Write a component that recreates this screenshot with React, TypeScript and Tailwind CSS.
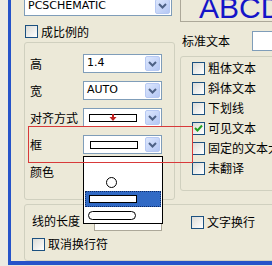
import React from "react";

const cjk = { fontFamily: '"Noto Sans CJK SC", "Noto Sans", sans-serif' };

const Chevron: React.FC = () => (
  <svg width="9" height="6" viewBox="0 0 9 6">
    <path d="M1 1 L4.5 4.5 L8 1" fill="none" stroke="#4d6185" strokeWidth="2" />
  </svg>
);

const DropButton: React.FC = () => (
  <div className="w-[15px] h-[15px] mr-[1px] rounded-[2px] border border-[#b7c9f3] bg-gradient-to-br from-[#dde7fd] to-[#b4c7f4] flex items-center justify-center">
    <Chevron />
  </div>
);

interface ComboProps {
  className?: string;
  children?: React.ReactNode;
}

const Combo: React.FC<ComboProps> = ({ className = "", children }) => (
  <div className={`h-[19px] border border-[#7f9db9] bg-white flex items-center ${className}`}>
    <div className="flex-1 flex items-center pl-[3px] overflow-hidden">{children}</div>
    <DropButton />
  </div>
);

const Checkbox: React.FC<{ checked?: boolean }> = ({ checked }) => (
  <div className="w-[13px] h-[13px] shrink-0 border border-[#1c5180] bg-gradient-to-br from-[#dcdcd7] to-white flex items-center justify-center">
    {checked && (
      <svg width="9" height="9" viewBox="0 0 9 9">
        <path d="M1 4 L3.5 6.5 L8 1.5" fill="none" stroke="#21a121" strokeWidth="2" />
      </svg>
    )}
  </div>
);

const CheckRow: React.FC<{ label: string; checked?: boolean }> = ({ label, checked }) => (
  <div className="h-[20px] flex items-center gap-[3px]">
    <Checkbox checked={checked} />
    <span className="text-[12px] leading-none whitespace-nowrap" style={cjk}>
      {label}
    </span>
  </div>
);

// rectangle preview used in the frame combo / list
const RectShape: React.FC = () => <div className="w-[48px] h-[8px] border border-black bg-white" />;

const App: React.FC = () => {
  const rows = ["高", "宽", "对齐方式", "框", "颜色"];

  return (
    <div className="w-[272px] h-[266px] overflow-hidden flex bg-[#ecebe3]">
      <div className="w-[8px] shrink-0" />
      <div className="flex-1 flex flex-col">
        <div className="relative flex-1 flex flex-col bg-[#ece9d8] border-l-[3px] border-b-[4px] border-[#2653c9] overflow-hidden">
          {/* top area */}
          <div className="h-[200px] flex items-start pl-[13px]">
            {/* left column */}
            <div className="w-[151px] shrink-0 flex flex-col">
              <Combo className="mt-[-4px] w-[148px] h-[20px]">
                <span className="text-[11px] text-black" style={{ fontFamily: '"DejaVu Sans", sans-serif' }}>
                  PCSCHEMATIC
                </span>
              </Combo>
              <div className="mt-[8px] h-[15px] flex items-center gap-[3px] pl-[1px]">
                <Checkbox />
                <span className="text-[12px] leading-none" style={cjk}>
                  成比例的
                </span>
              </div>
              <div className="mt-[3px] h-[158px] border border-[#d0d0bf] rounded-[3px] flex flex-col gap-[8px] pt-[11px] pl-[5px]">
                {rows.map(r => (
                  <div key={r} className="h-[19px] flex items-center">
                    <span className="w-[53px] text-[12px] leading-none" style={cjk}>
                      {r}
                    </span>
                    <Combo className="w-[79px]">
                      {r === "高" && <span className="text-[11px]" style={{ fontFamily: '"DejaVu Sans", sans-serif' }}>1.4</span>}
                      {r === "宽" && <span className="text-[11px]" style={{ fontFamily: '"DejaVu Sans", sans-serif' }}>AUTO</span>}
                      {r === "对齐方式" && (
                        <div className="relative ml-[2px]">
                          <RectShape />
                          <svg className="absolute left-[20px] top-[-2px]" width="8" height="10" viewBox="0 0 8 10">
                            <path d="M4 0 V6" stroke="#c02020" strokeWidth="2" />
                            <path d="M0.5 5 L4 9 L7.5 5 Z" fill="#c02020" />
                          </svg>
                        </div>
                      )}
                      {r === "框" && (
                        <div className="ml-[3px]">
                          <RectShape />
                        </div>
                      )}
                    </Combo>
                  </div>
                ))}
              </div>
            </div>

            {/* right column */}
            <div className="flex-1 flex flex-col ml-[5px]">
              <div className="h-[28px] mt-[-6px] border-l border-b border-[#aca899] bg-[#ece9d8] pl-[18px] overflow-hidden whitespace-nowrap">
                <span className="text-[30px] leading-[28px] text-[#1414c8]" style={{ fontFamily: '"Liberation Sans", Arial, sans-serif' }}>
                  ABCD
                </span>
              </div>
              <div className="mt-[9px] h-[20px] flex items-center">
                <span className="w-[72px] pl-[2px] text-[12px] leading-none" style={cjk}>
                  标准文本
                </span>
                <div className="h-[20px] flex-1 mr-[-4px] border border-[#7f9db9] bg-white" />
              </div>
              <div className="mt-[5px] h-[135px] mr-[-6px] border border-[#d0d0bf] rounded-[3px] pl-[11px] pt-[1px] flex flex-col">
                <CheckRow label="粗体文本" />
                <CheckRow label="斜体文本" />
                <CheckRow label="下划线" />
                <CheckRow label="可见文本" checked />
                <CheckRow label="固定的文本大小" />
                <CheckRow label="未翻译" />
              </div>
            </div>
          </div>

          {/* lower group */}
          <div className="mt-[4px] ml-[13px] mr-[-6px] h-[57px] border border-[#d0d0bf] rounded-[3px] grid grid-cols-[155px_1fr] pl-[7px]">
            <div className="flex flex-col">
              <div className="h-[28px] flex items-center pt-[4px]">
                <span className="w-[62px] text-[12px] leading-none" style={cjk}>
                  线的长度
                </span>
                <div className="h-[19px] w-[68px] border border-[#aca899] bg-white" />
              </div>
              <div className="h-[22px] flex items-center gap-[3px]">
                <Checkbox />
                <span className="text-[12px] leading-none" style={cjk}>
                  取消换行符
                </span>
              </div>
            </div>
            <div className="flex flex-col pl-[4px]">
              <div className="h-[30px] flex items-center pt-[4px]">
                <CheckRow label="文字换行" />
              </div>
            </div>
          </div>

          {/* opened list of the frame combo */}
          <div className="absolute left-[72px] top-[156px] w-[80px] h-[68px] border border-black bg-white flex flex-col">
            <div className="h-[17px]" />
            <div className="h-[17px] flex items-center justify-center pr-[24px]">
              <div className="w-[11px] h-[11px] rounded-full border border-black" />
            </div>
            <div className="h-[16px] mx-[1px] bg-[#316ac5] border border-dotted border-[#0c2a66] flex items-center pl-[3px]">
              <RectShape />
            </div>
            <div className="h-[16px] flex items-center pl-[4px]">
              <div className="w-[48px] h-[9px] rounded-full border border-black bg-white" />
            </div>
          </div>

          {/* red annotation frame */}
          <div className="absolute left-[17px] top-[126px] w-[165px] h-[37px] border border-[#d83a3a]" />
        </div>
        <div className="h-[1px] bg-[#e6e4da]" />
      </div>
    </div>
  );
};

export default App;
